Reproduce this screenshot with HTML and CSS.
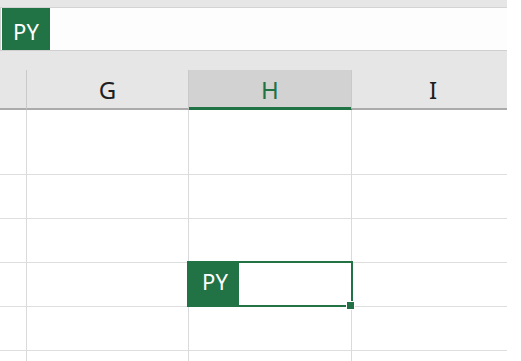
FILE: index.html
```html
<!DOCTYPE html>
<html>
<head>
<meta charset="utf-8">
<link rel="stylesheet" href="styles.css">
</head>
<body>
<div class="sheet">
  <div class="top">
    <div class="formula">
      <div class="namebox">PY</div>
      <div class="field"></div>
    </div>
  </div>
  <div class="grid heads">
    <div class="hc corner"></div>
    <div class="hc">G</div>
    <div class="hc sel">H</div>
    <div class="hc">I</div>
  </div>
  <div class="grid rows">
    <div class="c rh r1"></div><div class="c r1"></div><div class="c r1"></div><div class="c r1"></div>
    <div class="c rh"></div><div class="c"></div><div class="c"></div><div class="c"></div>
    <div class="c rh"></div><div class="c"></div><div class="c"></div><div class="c"></div>
    <div class="c rh"></div><div class="c"></div><div class="c active">
      <div class="selection">
        <div class="py">PY</div>
        <div class="handle"></div>
      </div>
    </div><div class="c"></div>
    <div class="c rh"></div><div class="c"></div><div class="c"></div><div class="c"></div>
    <div class="c rh"></div><div class="c"></div><div class="c"></div><div class="c"></div>
  </div>
</div>
</body>
</html>
```

FILE: styles.css
```css
html, body {
  margin: 0;
  padding: 0;
  background: #ffffff;
}
body {
  font-family: "Noto Sans", "Open Sans", sans-serif;
}
.sheet {
  width: 507px;
  height: 361px;
  overflow: hidden;
}
.top {
  background: #e6e6e6;
  padding-top: 7px;
  height: 63px;
}
.formula {
  display: flex;
  height: 44px;
  box-sizing: border-box;
  border-top: 1px solid #d4d4d4;
  border-bottom: 1px solid #cfcfcf;
  border-left: 1px solid #d0d0d0;
  padding-left: 1px;
  background: #fdfdfd;
}
.namebox {
  width: 48px;
  background: #217346;
  color: #ffffff;
  font-size: 22px;
  display: flex;
  align-items: center;
  justify-content: center;
  padding-top: 3px;
  box-sizing: border-box;
}
.field {
  flex: 1;
}
.grid {
  display: grid;
  grid-template-columns: 27px 162px 163px 163px;
}
.heads {
  background: #e6e6e6;
  height: 40px;
}
.hc {
  box-sizing: border-box;
  height: 40px;
  border-right: 1px solid #c9c9c9;
  border-bottom: 2px solid #ababab;
  display: flex;
  align-items: center;
  justify-content: center;
  font-size: 24px;
  color: #1f1f1f;
  padding-top: 1px;
}
.hc.sel {
  background: #d2d2d2;
  color: #217346;
  box-shadow: inset 0 -1px 0 #217346;
  border-bottom-color: #217346;
}
.c {
  box-sizing: border-box;
  height: 44px;
  border-right: 1px solid #dadada;
  border-bottom: 1px solid #dedede;
}
.c.r1 {
  height: 65px;
}
.active {
  position: relative;
}
.selection {
  position: absolute;
  left: -2px;
  top: -2px;
  width: 166px;
  height: 46px;
  box-sizing: border-box;
  border: 2px solid #217346;
}
.py {
  position: absolute;
  left: -2px;
  top: -2px;
  width: 52px;
  height: 46px;
  background: #217346;
  color: #ffffff;
  font-size: 22px;
  display: flex;
  align-items: center;
  justify-content: center;
  padding-bottom: 6px;
  padding-left: 4px;
  box-sizing: border-box;
}
.handle {
  position: absolute;
  left: 157px;
  top: 38px;
  width: 7px;
  height: 7px;
  background: #217346;
  border: 1px solid #ffffff;
}
```
